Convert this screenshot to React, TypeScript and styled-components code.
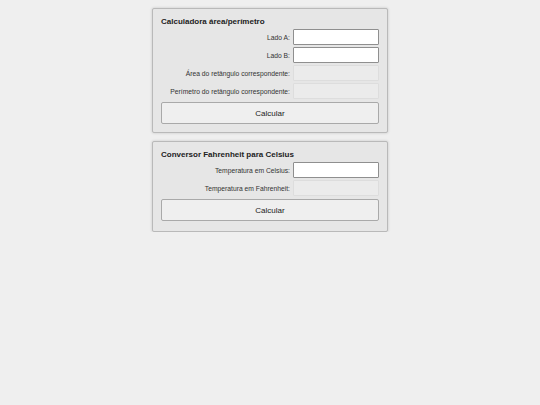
import React from "react";
import styled, { createGlobalStyle } from "styled-components";

const Global = createGlobalStyle`
  html, body { margin: 0; padding: 0; background: #efefef; }
  body { font-family: "Liberation Sans", Arial, sans-serif; }
  * { box-sizing: border-box; }
`;

const Page = styled.div`
  display: flex;
  flex-direction: column;
  align-items: center;
  gap: 8px;
  padding-top: 8px;
`;

const Panel = styled.section<{ $padBottom: number }>`
  width: 236px;
  background: #e6e6e6;
  border: 1px solid #b9b9b9;
  border-radius: 2px;
  box-shadow: 0 0 3px rgba(0, 0, 0, 0.18);
  padding: 8px 8px ${(p) => p.$padBottom}px;
  display: flex;
  flex-direction: column;
  gap: 2px;
`;

const Title = styled.h3`
  margin: 0;
  font-size: 8px;
  line-height: 10px;
  font-weight: bold;
  color: #222;
`;

const Row = styled.div`
  display: grid;
  grid-template-columns: 1fr 86px;
  column-gap: 3px;
  align-items: center;
  height: 16px;
`;

const Label = styled.label`
  text-align: right;
  font-size: 6.75px;
  color: #333;
  white-space: nowrap;
`;

const Field = styled.input<{ $readOnly?: boolean }>`
  height: 16px;
  width: 86px;
  margin: 0;
  padding: 0 3px;
  font-size: 7px;
  border-radius: 1px;
  outline: none;
  background: ${(p) => (p.$readOnly ? "#ebebeb" : "#ffffff")};
  border: 1px solid ${(p) => (p.$readOnly ? "#dddddd" : "#8f8f8f")};
`;

const Button = styled.button`
  margin-top: 1px;
  height: 22px;
  width: 100%;
  background: #efefef;
  border: 1px solid #a9a9a9;
  border-radius: 2px;
  font-family: "Liberation Sans", Arial, sans-serif;
  font-size: 8px;
  color: #222;
  cursor: pointer;
`;

type FieldSpec = { label: string; readOnly?: boolean };

function Calc({
  title,
  fields,
  padBottom,
}: {
  title: string;
  fields: FieldSpec[];
  padBottom: number;
}) {
  return (
    <Panel $padBottom={padBottom}>
      <Title>{title}</Title>
      {fields.map((f) => (
        <Row key={f.label}>
          <Label>{f.label}</Label>
          <Field $readOnly={f.readOnly} readOnly={f.readOnly} />
        </Row>
      ))}
      <Button>Calcular</Button>
    </Panel>
  );
}

export default function App() {
  return (
    <>
      <Global />
      <Page>
        <Calc
          title="Calculadora área/perímetro"
          padBottom={8}
          fields={[
            { label: "Lado A:" },
            { label: "Lado B:" },
            { label: "Área do retângulo correspondente:", readOnly: true },
            { label: "Perímetro do retângulo correspondente:", readOnly: true },
          ]}
        />
        <Calc
          title="Conversor Fahrenheit para Celsius"
          padBottom={10}
          fields={[
            { label: "Temperatura em Celsius:" },
            { label: "Temperatura em Fahrenheit:", readOnly: true },
          ]}
        />
      </Page>
    </>
  );
}
